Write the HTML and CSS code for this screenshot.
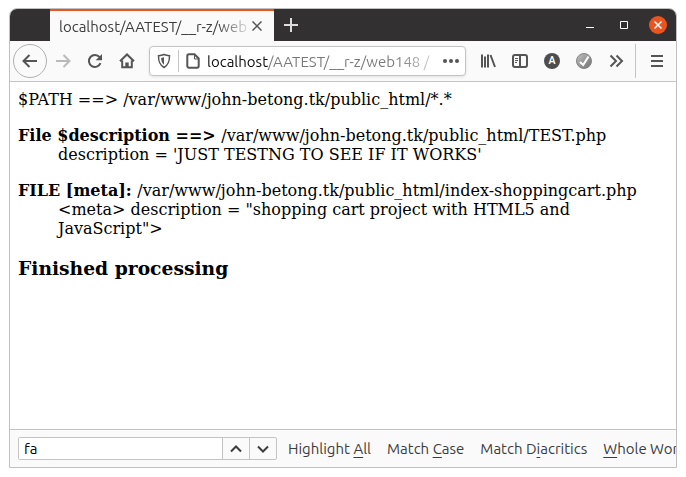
FILE: index.html
```html
<!DOCTYPE html>
<html lang="en">
  <head>
    <meta charset="UTF-8" />
    <meta name="viewport" content="width=device-width, initial-scale=1.0" />
    <title>localhost/AATEST/__r-z/web148</title>
    <link rel="stylesheet" href="styles.css">
  </head>
  <body>
    <div class="window">
      <header class="titlebar">
        <div class="tab">
          <span class="tab-title">localhost/AATEST/__r-z/web</span>
          <button class="tab-close" aria-label="Close tab">
            <svg width="10" height="10" viewBox="0 0 10 10"><path d="M.5 .5l9 9M9.500 .5l-9 9" /></svg>
          </button>
        </div>
        <button class="new-tab" aria-label="New tab">
          <svg width="14" height="14" viewBox="0 0 14 14"><path d="M7 0v14M0 7h14" /></svg>
        </button>
        <div class="window-buttons">
          <button aria-label="Minimize">
            <svg width="8" height="8" viewBox="0 0 8 8"><path d="M0 6.500h8" /></svg>
          </button>
          <button aria-label="Maximize">
            <svg width="8" height="8" viewBox="0 0 8 8"><path d="M.5 .5h7v7h-7z" /></svg>
          </button>
          <button class="close" aria-label="Close">
            <svg width="18" height="18" viewBox="0 0 18 18"><path d="M5.500 5.500l7 7M12.500 5.500l-7 7" /></svg>
          </button>
        </div>
      </header>

      <nav class="toolbar">
        <button class="tool back" aria-label="Back">
          <svg viewBox="0 0 16 16"><path d="M15 8H2M7.500 2L1.500 8l6 6" /></svg>
        </button>
        <button class="tool forward" aria-label="Forward" disabled>
          <svg viewBox="0 0 16 16"><path d="M1 8h13M8.500 2l6 6-6 6" /></svg>
        </button>
        <button class="tool" aria-label="Reload">
          <svg viewBox="0 0 16 16"><path d="M13.500 10.200A6 6 0 1 1 12.600 4.200" /><path class="fill" d="M15 1v6.300H8.700z" /></svg>
        </button>
        <button class="tool" aria-label="Home">
          <svg viewBox="0 0 16 16"><path d="M1 8.300L8 1.500l7 6.800M3.200 7.500v6.800h9.600V7.500" /><path class="fill" d="M6.300 14V9.500h3.400V14z" /></svg>
        </button>

        <div class="urlbar">
          <svg class="shield" viewBox="0 0 16 16"><path d="M8 1.500c2 .9 3.600 1.100 5.500 1.200 0 5.500-.8 9-5.500 11.800C3.300 11.700 2.500 8.200 2.500 2.700 4.400 2.600 6 2.400 8 1.500z" /><path class="fill" d="M8 4.300v7.400C5.700 9.700 5.300 7.800 5.200 5z" /></svg>
          <span class="url-divider"></span>
          <svg viewBox="0 0 16 16"><path d="M4 1.300h5.500l4.200 4.200V13a1.700 1.700 0 0 1-1.700 1.700H4A1.700 1.700 0 0 1 2.300 13V3A1.700 1.700 0 0 1 4 1.300z" /><path class="thin" d="M9.500 1.500V6h4" /></svg>
          <input class="url" type="text" aria-label="Address" value="localhost/AATEST/__r-z/web148 /" />
          <button class="page-actions" aria-label="Page actions">
            <svg viewBox="0 0 16 16"><circle class="fill" cx="2" cy="8" r="2" /><circle class="fill" cx="8" cy="8" r="2" /><circle class="fill" cx="14" cy="8" r="2" /></svg>
          </button>
        </div>

        <button class="tool" aria-label="Library">
          <svg viewBox="0 0 16 16"><path d="M2 1.500v13M5 3.500v11M8 1.500v13M10.500 2l4.500 12" /></svg>
        </button>
        <button class="tool" aria-label="Sidebars">
          <svg viewBox="0 0 16 16"><rect x="1" y="2" width="14" height="12" rx="2" /><path d="M8 2v12" /><path class="thin" d="M3 5.500h3M3 7.500h3M3 9.500h2" /></svg>
        </button>
        <button class="tool" aria-label="Account">
          <span class="account">A</span>
        </button>
        <button class="tool" aria-label="Validator">
          <svg viewBox="0 0 16 16">
            <defs>
              <linearGradient id="ball" x1="0" y1="0" x2="1" y2="1">
                <stop offset="0" stop-color="#c2c2c2" />
                <stop offset="1" stop-color="#707070" />
              </linearGradient>
            </defs>
            <circle cx="8" cy="8" r="7.500" fill="url(#ball)" stroke="#858585" stroke-width="1" />
            <path class="check" d="M4 9l3.200 3L12.500 3.500" />
          </svg>
        </button>
        <button class="tool" aria-label="More tools">
          <svg viewBox="0 0 16 16"><path d="M2.500 2.500L8 8l-5.500 5.500M8.500 2.500L14 8l-5.500 5.500" /></svg>
        </button>
        <span class="menu-divider"></span>
        <button class="tool" aria-label="Menu">
          <svg viewBox="0 0 16 16"><path d="M2 3h12M2 8h12M2 13h12" /></svg>
        </button>
      </nav>

      <main class="page">
        <p>$PATH ==&gt; /var/www/john-betong.tk/public_html/*.*</p>
        <dl>
          <dt><b>File $description ==&gt; </b>/var/www/john-betong.tk/public_html/TEST.php</dt>
          <dd>description = 'JUST TESTNG TO SEE IF IT WORKS'</dd>
        </dl>
        <dl>
          <dt><b>FILE [meta]: </b>/var/www/john-betong.tk/public_html/index-shoppingcart.php</dt>
          <dd>&lt;meta&gt; description = "shopping cart project with HTML5 and JavaScript"&gt;</dd>
        </dl>
        <h3>Finished processing</h3>
      </main>

      <footer class="findbar">
        <div class="find-box">
          <input type="text" aria-label="Find in page" value="fa" />
          <button aria-label="Previous">
            <svg width="12" height="8" viewBox="0 0 12 8"><path d="M1 6.500l5-5 5 5" /></svg>
          </button>
          <button aria-label="Next">
            <svg width="12" height="8" viewBox="0 0 12 8"><path d="M1 1.500l5 5 5-5" /></svg>
          </button>
        </div>
        <div class="find-options">
          <button>Highlight <u>A</u>ll</button>
          <button>Match <u>C</u>ase</button>
          <button>Match D<u>i</u>acritics</button>
          <button><u>W</u>hole Words</button>
        </div>
      </footer>
    </div>
  </body>
</html>
```
FILE: styles.css
```css
* {
  box-sizing: border-box;
}

body {
  margin: 0;
  padding: 8px 9px 9px;
  min-height: 100vh;
  display: flex;
  background: #fff;
  font-family: Ubuntu, "Open Sans", "Noto Sans", sans-serif;
  font-size: 15px;
}

button,
input {
  font: inherit;
  color: inherit;
  border: 0;
  padding: 0;
  background: none;
}

svg {
  display: block;
  flex: none;
  fill: none;
  stroke: currentColor;
  stroke-width: 2;
}

svg .fill {
  fill: currentColor;
  stroke: none;
}

.window {
  flex: 1;
  min-width: 0;
  display: flex;
  flex-direction: column;
  border: 1px solid #c0c0c0;
  border-radius: 8px 8px 0 0;
  overflow: hidden;
}

/* Title bar */
.titlebar {
  display: flex;
  height: 32px;
  padding-left: 40px;
  background: #333031;
  color: #fff;
}

.tab {
  display: flex;
  align-items: center;
  width: 224px;
  padding: 0 12px 0 9px;
  gap: 6px;
  border-top: 2px solid #e95420;
  background: #fafafa;
  color: #3d3d3d;
}

.tab-title {
  flex: 1;
  overflow: hidden;
  white-space: nowrap;
  -webkit-mask-image: linear-gradient(to left, rgba(0, 0, 0, 0.2), #000 28px);
  mask-image: linear-gradient(to left, rgba(0, 0, 0, 0.2), #000 28px);
}

.tab-close {
  color: #555;
}

.tab-close svg {
  stroke-width: 1.5;
}

.new-tab {
  display: flex;
  align-items: center;
  justify-content: center;
  width: 34px;
  color: #ddd;
}

.window-buttons {
  display: flex;
  align-items: center;
  margin-left: auto;
  padding-right: 1px;
}

.window-buttons button {
  display: flex;
  justify-content: center;
  width: 34px;
}

.window-buttons svg {
  stroke-width: 1;
}

.window-buttons .close svg {
  border-radius: 50%;
  background: #e95420;
  stroke-width: 1.5;
}

/* Navigation toolbar */
.toolbar {
  display: flex;
  align-items: center;
  height: 41px;
  padding: 0 3px;
  background: #fafafa;
  border-bottom: 1px solid #c4c4c4;
  color: #555;
}

.tool {
  display: flex;
  align-items: center;
  justify-content: center;
  width: 32px;
  height: 32px;
}

.tool svg,
.urlbar svg {
  width: 16px;
  height: 16px;
}

svg .thin {
  stroke-width: 1;
}

.tool .check {
  stroke: #fff;
}

.back {
  width: 34px;
  height: 34px;
  border: 1px solid #b0b0b0;
  border-radius: 50%;
}

.forward {
  color: #bababa;
}

.account {
  width: 16px;
  height: 16px;
  border-radius: 50%;
  background: #4d4d4d;
  color: #fff;
  font-size: 10px;
  font-weight: bold;
  line-height: 16px;
}

.urlbar {
  flex: 1;
  min-width: 0;
  display: flex;
  align-items: center;
  height: 30px;
  margin: 0 6px;
  padding: 0 6px;
  border: 1px solid #c4c4c4;
  border-radius: 4px;
  background: #fff;
  box-shadow: 0 1px 3px rgba(0, 0, 0, 0.1);
}

.url-divider {
  width: 1px;
  height: 22px;
  margin: 0 6px;
  background: #c4c4c4;
}

.urlbar .shield {
  stroke-width: 1.5;
}

/* Host in black, path in grey, fading out at the end */
.url {
  flex: 1;
  min-width: 0;
  margin: 0 6px;
  color: transparent;
  background: linear-gradient(to right, #0c0c0d 61px, #777 61px, #777 190px, #ddd);
  -webkit-background-clip: text;
  background-clip: text;
}

.menu-divider {
  width: 1px;
  height: 34px;
  margin: 0 5px 0 3px;
  background: #c4c4c4;
}

/* Page content */
.page {
  flex: 1;
  padding: 8px;
  font-family: "DejaVu Serif", serif;
  font-size: 16px;
  line-height: 19px;
  color: #000;
}

.page p,
.page dl {
  margin: 0 0 17px;
}

.page dd {
  margin-left: 40px;
}

.page h3 {
  margin: 21px 0;
}

/* Find bar */
.findbar {
  display: flex;
  align-items: center;
  height: 38px;
  padding-left: 8px;
  gap: 11px;
  border-top: 1px solid #c4c4c4;
  background: #fafafa;
  color: #3d3d3d;
}

.find-box {
  flex: none;
  display: flex;
  height: 23px;
  border: 1px solid #c4c4c4;
  border-radius: 2px;
}

.find-box input {
  width: 203px;
  padding: 0 5px;
  background: #fff;
  color: #000;
}

.find-box button {
  display: flex;
  align-items: center;
  justify-content: center;
  width: 27px;
  border-left: 1px solid #c4c4c4;
}

.find-options {
  flex: 1;
  min-width: 0;
  display: flex;
  gap: 16px;
}

.find-options button {
  flex: none;
  white-space: nowrap;
}

.find-options u {
  text-underline-offset: 3px;
}
```
